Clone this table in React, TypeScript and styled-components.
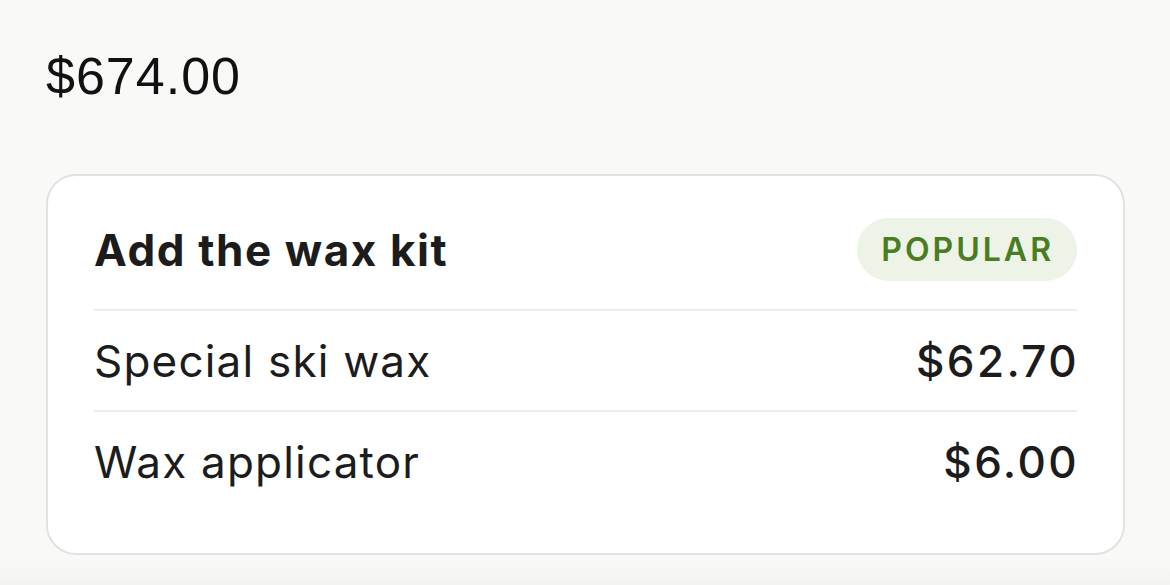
import React from 'react';
import styled, { createGlobalStyle } from 'styled-components';

const GlobalStyle = createGlobalStyle`
  html, body {
    margin: 0;
    padding: 0;
    background: #f9f9f7;
  }
  body {
    font-family: Inter, "Noto Sans", sans-serif;
    color: #1c1c1c;
  }
`;

const Page = styled.div`
  display: flex;
  flex-direction: column;
  padding: 44px 0 0 46px;
  height: 585px;
  box-sizing: border-box;
  overflow: hidden;
`;

const Total = styled.div`
  font-family: "Liberation Sans", Arial, sans-serif;
  font-size: 52px;
  letter-spacing: 1px;
  line-height: 64px;
  color: #111;
`;

const Card = styled.section`
  margin-top: 66px;
  width: 1079px;
  box-sizing: border-box;
  background: #fff;
  border: 2px solid #e2e2e0;
  border-radius: 30px;
  padding: 42px 46px 42px;
`;

const Header = styled.div`
  display: flex;
  align-items: center;
  justify-content: space-between;
  padding-bottom: 28px;
  border-bottom: 2px solid #ececeb;
`;

const Title = styled.h2`
  margin: 0;
  font-size: 44px;
  font-weight: 700;
  letter-spacing: 1.6px;
  line-height: 52px;
  color: #1c1c1c;
`;

const Badge = styled.span`
  display: inline-flex;
  align-items: center;
  height: 63px;
  padding: 0 23px 0 24px;
  border-radius: 32px;
  background: #edf3e6;
  color: #4a7d22;
  font-size: 32px;
  font-weight: 600;
  letter-spacing: 3px;
`;

const Item = styled.div<{ $last?: boolean }>`
  display: flex;
  align-items: center;
  justify-content: space-between;
  height: 99px;
  border-bottom: ${(p) => (p.$last ? 'none' : '2px solid #ececeb')};
  font-size: 44px;
`;

const Name = styled.span`
  font-weight: 400;
  letter-spacing: 1.2px;
`;

const Price = styled.span`
  font-weight: 500;
  letter-spacing: 2.4px;
  margin-right: -2px;
`;

const Shade = styled.div`
  flex: 1;
  margin-left: -46px;
  background: linear-gradient(to bottom, rgba(0, 0, 0, 0) 0%, rgba(0, 0, 0, 0.025) 100%);
`;

const items = [
  { name: 'Special ski wax', price: '$62.70' },
  { name: 'Wax applicator', price: '$6.00' },
];

const App = () => {
  return (
    <>
      <GlobalStyle />
      <Page>
        <Total>$674.00</Total>
        <Card>
          <Header>
            <Title>Add the wax kit</Title>
            <Badge>POPULAR</Badge>
          </Header>
          {items.map((it, i) => (
            <Item key={it.name} $last={i === items.length - 1}>
              <Name>{it.name}</Name>
              <Price>{it.price}</Price>
            </Item>
          ))}
        </Card>
        <Shade />
      </Page>
    </>
  );
};

export default App;
